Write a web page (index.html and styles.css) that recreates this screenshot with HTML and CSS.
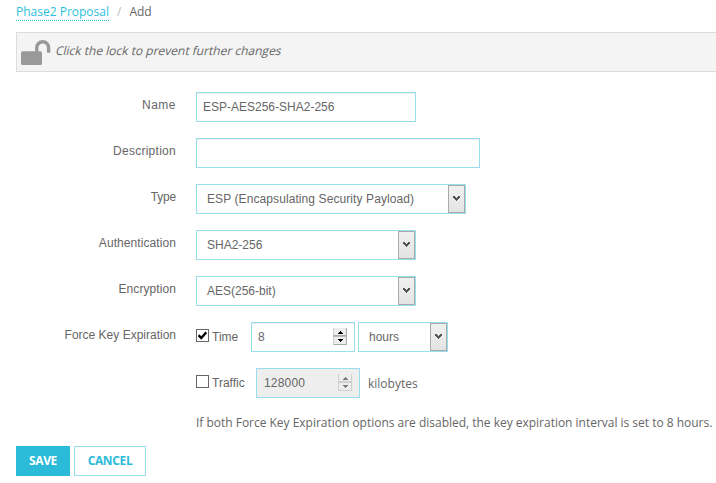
FILE: index.html
```html
<!DOCTYPE html>
<html lang="en">
<head>
<meta charset="utf-8">
<title>Phase2 Proposal</title>
<link rel="stylesheet" href="styles.css">
</head>
<body>
<svg class="defs" width="0" height="0">
  <symbol id="chevron" viewBox="0 0 7 6"><path d="M0 0h2v1h1v1h1v-1h1v-1h2v2h-1v1h-1v1h-1v1h-1v-1h-1v-1h-1v-1h-1z"/></symbol>
  <symbol id="up" viewBox="0 0 5 3"><path d="M2 0h1v1h1v1h1v1h-5v-1h1v-1h1z"/></symbol>
  <symbol id="down" viewBox="0 0 5 3"><path d="M0 0h5v1h-1v1h-1v1h-1v-1h-1v-1h-1z"/></symbol>
</svg>
<nav class="crumbs"><a class="crumb-link">Phase2 Proposal</a><span class="sep">/</span><span>Add</span></nav>
<div class="lockbar">
  <svg class="lock" width="30" height="26" viewBox="0 0 30 26"><rect x="0" y="11.2" width="21" height="13.8" rx="1.5" fill="#999"/><path d="M15.8 12V7.7a5.9 5.9 0 0 1 11.8 0v5" fill="none" stroke="#999" stroke-width="3.4"/></svg>
  <span class="lock-text">Click the lock to prevent further changes</span>
</div>
<form class="form">
  <div class="row"><label class="label wide">Name</label><div class="field w220">ESP-AES256-SHA2-256</div></div>
  <div class="row"><label class="label loose">Description</label><div class="field w284"></div></div>
  <div class="row"><label class="label tight">Type</label><div class="field select w270"><span class="payload">ESP (Encapsulating Security Payload)</span><i class="arrow"><svg width="7" height="6"><use href="#chevron"/></svg></i></div></div>
  <div class="row"><label class="label slight">Authentication</label><div class="field select w220"><span>SHA2-256</span><i class="arrow"><svg width="7" height="6"><use href="#chevron"/></svg></i></div></div>
  <div class="row"><label class="label slight">Encryption</label><div class="field select w220"><span>AES(256-bit)</span><i class="arrow"><svg width="7" height="6"><use href="#chevron"/></svg></i></div></div>
  <div class="row">
    <label class="label">Force Key Expiration</label>
    <span class="check"><svg width="9" height="9" viewBox="0 0 9 9"><path d="M0.5 4.2L3.3 7L8.3 1.3" fill="none" stroke="#000" stroke-width="2.4"/></svg></span>
    <span class="check-label time">Time</span>
    <div class="field number"><span>8</span><i class="spin"><b><svg width="5" height="3"><use href="#up"/></svg></b><b><svg width="5" height="3"><use href="#down"/></svg></b></i></div>
    <div class="field select w90"><span>hours</span><i class="arrow"><svg width="7" height="6"><use href="#chevron"/></svg></i></div>
  </div>
  <div class="row">
    <label class="label"></label>
    <span class="check"></span>
    <span class="check-label traffic">Traffic</span>
    <div class="field number disabled"><span>128000</span><i class="spin"><b><svg width="5" height="3"><use href="#up"/></svg></b><b><svg width="5" height="3"><use href="#down"/></svg></b></i></div>
    <span class="unit">kilobytes</span>
  </div>
  <p class="note">If both Force Key Expiration options are disabled, the key expiration interval is set to 8 hours.</p>
</form>
<div class="actions"><span class="btn save">SAVE</span><span class="btn cancel">CANCEL</span></div>
</body>
</html>
```
FILE: styles.css
```css
* { box-sizing: border-box; }
body {
  margin: 0;
  height: 483px;
  overflow: hidden;
  background: #fff;
  color: #666;
  font: 12px/18px "Liberation Sans", Arial, sans-serif;
  white-space: nowrap;
}
.defs { position: absolute; }
svg { display: block; }
.crumbs {
  display: flex;
  height: 32px;
  padding: 3px 0 0 16px;
  font-family: "Open Sans", sans-serif;
}
.crumb-link { height: 18px; color: #2bbfda; border-bottom: 1px dotted #2bbfda; }
.sep { margin: 0 8px; color: #bbb; }
.lockbar {
  display: flex;
  height: 40px;
  margin-left: 16px;
  padding: 7px 0 0 4px;
  background: #f4f4f4;
  border: 1px solid #ddd;
  border-right: 0;
}
.lock-text {
  height: 18px;
  margin: 2px 0 0 5px;
  font-family: "Open Sans", sans-serif;
  transform: skewX(-14deg);
}
.form { margin: 0; padding-top: 20px; }
.row { display: flex; height: 46px; }
.label { width: 176px; margin-right: 20px; padding-top: 4px; text-align: right; }
.wide { letter-spacing: 0.5px; }
.loose { letter-spacing: 0.27px; }
.slight { letter-spacing: 0.08px; }
.tight { letter-spacing: -0.2px; }
.payload { letter-spacing: 0.09px; }
.field {
  display: flex;
  height: 30px;
  padding-left: 6px;
  border: 1px solid #96dfeb;
  line-height: 28px;
  box-shadow: inset 0 1px 0 #eee;
}
.select { padding-left: 10px; justify-content: space-between; box-shadow: none; }
.w220 { width: 220px; }
.w284 { width: 284px; }
.w270 { width: 270px; }
.w90 { width: 90px; }
.arrow {
  display: flex;
  width: 17px;
  height: 28px;
  align-items: center;
  justify-content: center;
  border: 1px solid #aaa;
  background: linear-gradient(#f0f0f0, #e4e4e4);
  fill: #555;
}
.check {
  display: flex;
  width: 13px;
  height: 13px;
  margin: 7px 3px 0 0;
  align-items: center;
  justify-content: center;
  border: 1px solid #666;
}
.check-label { padding-top: 6px; }
.time { width: 39px; }
.traffic { width: 44px; }
.number { width: 104px; margin-right: 3px; justify-content: space-between; }
.spin {
  width: 14px;
  height: 17px;
  margin: 5px 7px 0 0;
  fill: #000;
}
.spin b {
  display: flex;
  height: 8px;
  justify-content: center;
  padding-top: 3px;
  background: #eee;
  border: solid #aaa;
  border-width: 0 1px 1px;
  border-left-color: #ccc;
}
.spin b + b { height: 9px; padding-top: 2px; border-top: 1px solid #bbb; }
.disabled { padding-left: 7px; background: #eee; letter-spacing: 0.2px; }
.disabled .spin { fill: #777; }
.disabled .spin b { border-color: #d0d0d0; }
.unit { padding: 7px 0 0 5px; font-family: "Open Sans", sans-serif; }
.note { margin: 0 0 0 196px; font-family: "Open Sans", sans-serif; letter-spacing: -0.015px; }
.actions { display: flex; gap: 4px; margin: 14px 0 0 16px; }
.btn {
  height: 30px;
  border: 1px solid #96dfeb;
  color: #2bbbd8;
  font: 700 12px/28px "Open Sans", sans-serif;
  letter-spacing: -0.35px;
  text-align: center;
}
.save { width: 54px; background: #2bbbd8; border-color: #2bbbd8; color: #fff; }
.cancel { width: 72px; }
```
